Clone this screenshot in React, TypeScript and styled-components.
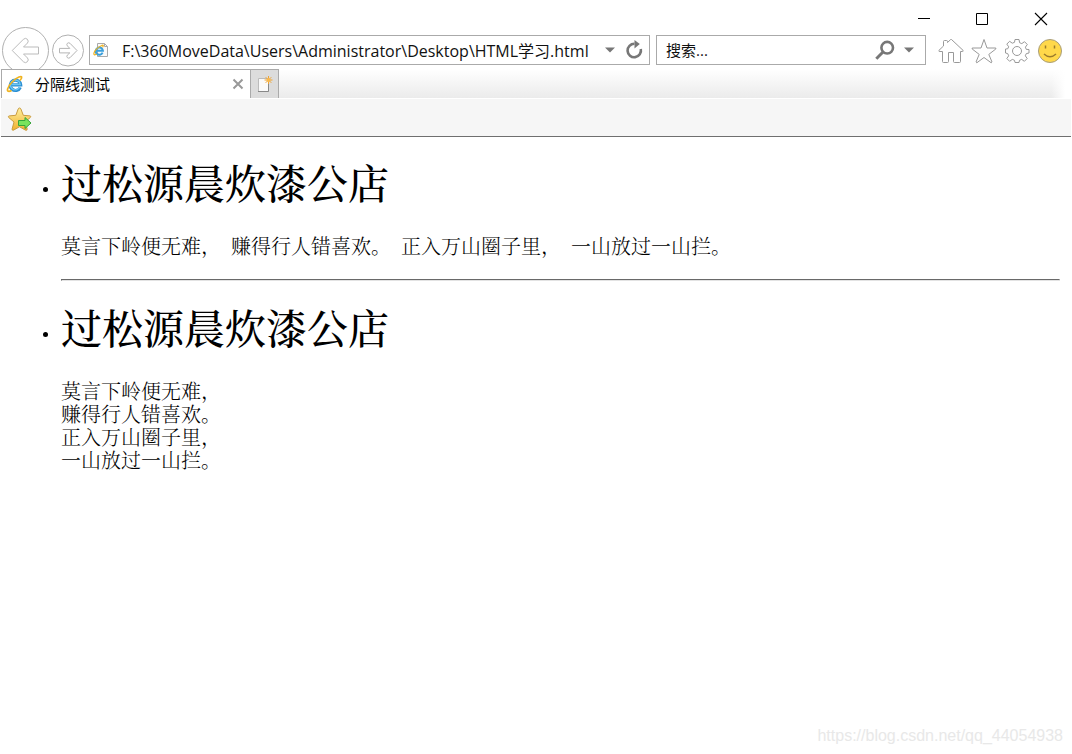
import React from 'react';
import styled, { createGlobalStyle } from 'styled-components';

const uiFont = '"Open Sans", "Noto Sans CJK SC", sans-serif';
const pageFont = '"Liberation Serif", "Noto Serif CJK SC", "Noto Sans CJK SC", serif';

const GlobalStyle = createGlobalStyle`
  * { box-sizing: border-box; }
  body { margin: 0; background: #fff; color: #000; }
  svg { display: block; flex: none; }
`;

const Window = styled.div`
  display: flex;
  flex-direction: column;
  min-height: 100vh;
  padding: 0 1px;
  font-family: ${uiFont};
`;

const TitleBar = styled.div`
  display: flex;
  align-items: flex-start;
  justify-content: flex-end;
  gap: 45px;
  height: 27px;
  padding: 12px 23px 0 0;
`;

const PlainButton = styled.button`
  display: flex;
  align-items: center;
  justify-content: center;
  flex: none;
  margin: 0;
  padding: 0;
  border: 0;
  background: none;
`;

const NavBar = styled.div`
  display: flex;
  align-items: flex-start;
  height: 42px;
  padding: 0 8px 0 1px;
`;

const ForwardButton = styled(PlainButton)`
  margin: 7px 5px 0 3px;
`;

const Field = styled.form<{ $width?: string }>`
  display: flex;
  align-items: center;
  flex: ${p => (p.$width ? `none` : '1')};
  width: ${p => p.$width ?? 'auto'};
  min-width: 0;
  height: 30px;
  margin-top: 8px;
  border: 1px solid #aaa;
  background: #fff;
`;

const AddressField = styled(Field)`
  gap: 10px;
  padding: 0 6px 0 3px;
  margin-right: 6px;
`;

const SearchField = styled(Field)`
  gap: 9px;
  padding: 0 11px 0 9px;
`;

const FieldInput = styled.input<{ $size: number; $indent?: number }>`
  flex: 1;
  min-width: 0;
  height: 28px;
  padding: 0 0 0 ${p => p.$indent ?? 0}px;
  border: 0;
  outline: 0;
  background: none;
  color: #111;
  font: ${p => p.$size}px ${uiFont};
  &::placeholder { color: #111; opacity: 1; }
`;

const Tools = styled.div`
  display: flex;
  gap: 7px;
  margin: 11px 0 0 12px;
`;

const TabBar = styled.div`
  display: flex;
  height: 29px;
`;

const Tab = styled.div`
  display: flex;
  align-items: center;
  width: 249px;
  padding: 0 6px 0 4px;
  border: solid #aaa;
  border-width: 1px 0 0 1px;
  background: #fff;
`;

const TabTitle = styled.span`
  flex: 1;
  margin-left: 10px;
  font-size: 15px;
  line-height: 20px;
`;

const NewTab = styled(PlainButton)`
  width: 29px;
  border: 1px solid #aaa;
  border-bottom: 0;
  background: #dcdcdc;
`;

const TabSpace = styled.div`
  flex: 1;
  background: linear-gradient(to right, transparent calc(100% - 20px), #fff calc(100% - 6px)),
    linear-gradient(#fff, #ebebeb);
`;

const FavoritesBar = styled.div`
  height: 39px;
  padding: 8px 6px 0;
  border-top: 1px solid #fff;
  border-bottom: 1px solid #6f6f6f;
  background: #f6f6f6;
`;

const Page = styled.main`
  flex: 1;
  padding: 25px 11px 24px 42px;
  font-family: ${pageFont};
`;

const PoemList = styled.ul`
  margin: 0;
  padding: 0;
  list-style: none;
`;

const Poem = styled.li`
  display: grid;
  grid-template-columns: 18px minmax(0, 1fr);
  &::before {
    content: '';
    width: 5px;
    height: 5px;
    margin-top: 25px;
    border-radius: 50%;
    background: #000;
  }
`;

const PoemTitle = styled.h1`
  margin: 0 0 28px;
  font-size: 41px;
  font-weight: 500;
  line-height: 46px;
`;

const Verse = styled.p<{ $stacked?: boolean }>`
  display: flex;
  flex-direction: ${p => (p.$stacked ? 'column' : 'row')};
  flex-wrap: wrap;
  column-gap: 10px;
  margin: 0;
  font-size: 20px;
  font-weight: 300;
  line-height: 23px;
`;

const Divider = styled.hr`
  height: 2px;
  margin: 20px 0 26px;
  border: 1px solid;
  border-color: #696969 #e3e3e3 #e3e3e3 #696969;
`;

const Watermark = styled.footer`
  align-self: flex-end;
  padding: 0 8px 8px;
  color: #e8e8e8;
  font: 16px/20px "Liberation Sans", sans-serif;
`;

const IeLogo = ({ size }: { size: number }) => (
  <svg width={size} height={size} viewBox="0 0 19 19" fill="none" aria-hidden="true">
    <path d="M14.300 12.300A5.200 5.200 0 1 1 14.700 9.900H5.500" stroke="#2b8fd3" strokeWidth="3.200" />
    <path d="M13.800 12A4.900 4.900 0 1 1 14.200 9.500H5.500" stroke="#6cc6f2" strokeWidth="1.400" />
    <path d="M14 5.500C16.800 2 16 .9 13 2 8.500 3.800 2.800 9.500 1.600 14c-.7 2.800 1.600 2.800 4 1.400" stroke="#efb321" strokeWidth="1.700" />
  </svg>
);

const PageIcon = () => (
  <svg width="16" height="16" viewBox="0 0 16 16" fill="none" aria-hidden="true">
    <path d="M4.500 1.500h7l3 3v10h-10z" fill="#fafafa" stroke="#aaa" />
    <path d="M11.500 1.500v3h3" stroke="#aaa" />
    <path d="M9.600 10.600A3.600 3.600 0 1 1 9.900 8.700H3.500" stroke="#3a9fdc" strokeWidth="2" />
    <path d="M9.500 5.300c1.600-2 .8-2.600-1.200-1.600C5 5.300 1.500 8.500.9 11.300c-.4 1.800 1.200 1.900 2.800.8" stroke="#efb321" strokeWidth="1.200" />
  </svg>
);

const Caret = () => (
  <svg width="10" height="6" viewBox="0 0 10 6" aria-hidden="true">
    <path d="M0 .5h10L5 5.500z" fill="#777" />
  </svg>
);

const lines = ['莫言下岭便无难，', '赚得行人错喜欢。', '正入万山圈子里，', '一山放过一山拦。'];

export default function App() {
  return (
    <>
      <GlobalStyle />
      <Window>
        <TitleBar>
          <PlainButton aria-label="最小化">
            <svg width="14" height="14" viewBox="0 0 14 14"><path d="M2 6.500h12" stroke="#000" /></svg>
          </PlainButton>
          <PlainButton aria-label="最大化">
            <svg width="14" height="14" viewBox="0 0 14 14"><path d="M1.500 1.500h11v11h-11z" stroke="#000" fill="none" /></svg>
          </PlainButton>
          <PlainButton aria-label="关闭">
            <svg width="14" height="14" viewBox="0 0 14 14"><path d="M1 1l12 12M13 1L1 13" stroke="#000" strokeWidth="1.100" /></svg>
          </PlainButton>
        </TitleBar>

        <NavBar>
          <PlainButton aria-label="后退">
            <svg width="47" height="42" viewBox="0 0 47 42" fill="none" stroke="#b0b0b0">
              <circle cx="23.500" cy="23.500" r="23" />
              <path d="M10.200 23.500 21.500 12.200q2-1.700 3.800 0 1.800 2 .2 3.800L21.500 20h15v7h-15l4 4q1.700 2-.2 3.800-1.800 1.800-3.800 0z" stroke="#bbb" />
            </svg>
          </PlainButton>
          <ForwardButton aria-label="前进">
            <svg width="32" height="33" viewBox="0 0 32 33" fill="none" stroke="#b0b0b0">
              <circle cx="16" cy="16.500" r="15.500" />
              <path d="M25 16.500 18 9.300q-1.400-1.100-2.600 0-1.200 1.300 0 2.600l2.400 2.500H7.500v4.500h10.300L15.400 21q-1.200 1.400 0 2.700 1.300 1 2.600 0z" stroke="#b5b5b5" />
            </svg>
          </ForwardButton>

          <AddressField onSubmit={e => e.preventDefault()}>
            <PageIcon />
            <FieldInput
              $size={16}
              $indent={3}
              aria-label="地址"
              spellCheck={false}
              defaultValue={'F:\\360MoveData\\Users\\Administrator\\Desktop\\HTML学习.html'}
            />
            <PlainButton type="button" aria-label="显示地址列表"><Caret /></PlainButton>
            <PlainButton aria-label="刷新">
              <svg width="18" height="20" viewBox="0 0 18 20" fill="none">
                <path d="M9.500 3.800A6.700 6.700 0 1 0 15.800 9" stroke="#777" strokeWidth="2.600" />
                <path d="M9.500 0v8.400L14.800 4z" fill="#777" />
              </svg>
            </PlainButton>
          </AddressField>

          <SearchField $width="270px" onSubmit={e => e.preventDefault()}>
            <FieldInput $size={15} aria-label="搜索" placeholder="搜索..." />
            <PlainButton aria-label="搜索">
              <svg width="20" height="20" viewBox="0 0 20 20" fill="none" stroke="#777">
                <circle cx="12.200" cy="7.700" r="5.800" strokeWidth="2.600" />
                <path d="M8 12 1.300 18.700" strokeWidth="3" />
              </svg>
            </PlainButton>
            <PlainButton type="button" aria-label="搜索选项"><Caret /></PlainButton>
          </SearchField>

          <Tools>
            <PlainButton aria-label="主页">
              <svg width="26" height="26" viewBox="0 0 26 26" fill="none" stroke="#999">
                <path d="M4.500 13.500H1.200q-.9-.5-.2-1.200L5.500 8V3.500q0-1 1-1h2q1 0 1 1V4.500L12.700 1.500h.8L25 12.300q.6 1.200-.5 1.200H22.500v10q0 1-1 1h-5q-1 0-1-1v-9h-5v9q0 1-1 1h-4q-1 0-1-1z" />
              </svg>
            </PlainButton>
            <PlainButton aria-label="收藏夹">
              <svg width="26" height="26" viewBox="0 0 26 26" fill="none" stroke="#999" strokeLinejoin="round">
                <path d="m13 1.500 3 8.500h8.800v1L17.800 16.400l3.200 7.600-.8.800L13 19.500l-7.200 5.300-.8-.8 3.200-7.600L1.200 11v-1H10z" />
              </svg>
            </PlainButton>
            <PlainButton aria-label="工具">
              <svg width="26" height="26" viewBox="0 0 26 26" fill="none" stroke="#999" strokeLinejoin="round">
                <circle cx="13" cy="13" r="4.500" />
                <path d="M11 1.500h4l.6 3.200 2.200.9 2.700-1.900 2.800 2.800-1.900 2.700.9 2.200 2.700.1v3.500l-2.700.6-1 2.200 1.900 2.700-2.800 2.800-2.700-1.900-2.200.9L15 24.500h-4l-.5-2.200-2.200-.9-2.700 1.900-2.800-2.800 1.900-2.700-1-2.200-2.200-.6v-4l2.200-.2 1-2-1.900-2.700 2.800-2.800 2.700 1.900 2.200-.9z" />
              </svg>
            </PlainButton>
            <PlainButton aria-label="反馈">
              <svg width="26" height="26" viewBox="0 0 26 26" fill="none">
                <circle cx="13" cy="13" r="11.500" fill="#ffd84a" stroke="#a79d7c" />
                <path d="M8.500 7.500v3M17.500 7.500v3" stroke="#9b7b2c" strokeWidth="1.500" />
                <path d="M7 16q6 5.500 12 0" stroke="#9b7b2c" strokeWidth="1.500" />
              </svg>
            </PlainButton>
          </Tools>
        </NavBar>

        <TabBar>
          <Tab>
            <IeLogo size={19} />
            <TabTitle>分隔线测试</TabTitle>
            <PlainButton aria-label="关闭标签页">
              <svg width="12" height="12" viewBox="0 0 12 12"><path d="M1.500 1.500l9 9M10.500 1.500l-9 9" stroke="#999" strokeWidth="2" /></svg>
            </PlainButton>
          </Tab>
          <NewTab aria-label="新建标签页">
            <svg width="16" height="18" viewBox="0 0 16 18" fill="none">
              <path d="M1.500 3.500h10v13h-10z" fill="#fafafa" stroke="#bbb" />
              <path d="M1 16.500h10.500V7" stroke="#888" />
              <path d="M11.500 1v8M7.500 5h8M8.700 2.200l5.600 5.600M14.300 2.200 8.700 7.800" stroke="#eda335" />
              <circle cx="11.500" cy="5" r="2" fill="#f9b94d" />
            </svg>
          </NewTab>
          <TabSpace />
        </TabBar>

        <FavoritesBar>
          <PlainButton aria-label="添加到收藏夹栏">
            <svg width="25" height="25" viewBox="0 0 25 25" strokeLinejoin="round">
              <defs>
                <linearGradient id="gold" x2="0" y2="1">
                  <stop stopColor="#fff0a0" />
                  <stop offset="1" stopColor="#efb02c" />
                </linearGradient>
              </defs>
              <path d="M12.500 1q1 0 1.400 1l2.400 6.300 6.700.6q1.500.4.400 1.500l-5.200 4.600 2 7q0 1.800-1.600 1.200l-6.100-3.400-6.100 3.400q-1.600.3-1.300-1.200l1.900-7L1.600 10.400Q.8 9.200 2.200 8.900l6.600-.6L11.200 2q.4-1 1.300-1z" fill="url(#gold)" stroke="#c99c42" />
              <path d="M11.500 13.500h6.500v-3l6 5.500-6 5.500v-3h-6.500z" fill="#79e35c" stroke="#36a43a" />
            </svg>
          </PlainButton>
        </FavoritesBar>

        <Page>
          <PoemList>
            <Poem>
              <div>
                <PoemTitle>过松源晨炊漆公店</PoemTitle>
                <Verse>{lines.map(line => <span key={line}>{line}</span>)}</Verse>
                <Divider />
              </div>
            </Poem>
            <Poem>
              <div>
                <PoemTitle>过松源晨炊漆公店</PoemTitle>
                <Verse $stacked>{lines.map(line => <span key={line}>{line}</span>)}</Verse>
              </div>
            </Poem>
          </PoemList>
        </Page>
        <Watermark>https://blog.csdn.net/qq_44054938</Watermark>
      </Window>
    </>
  );
}
